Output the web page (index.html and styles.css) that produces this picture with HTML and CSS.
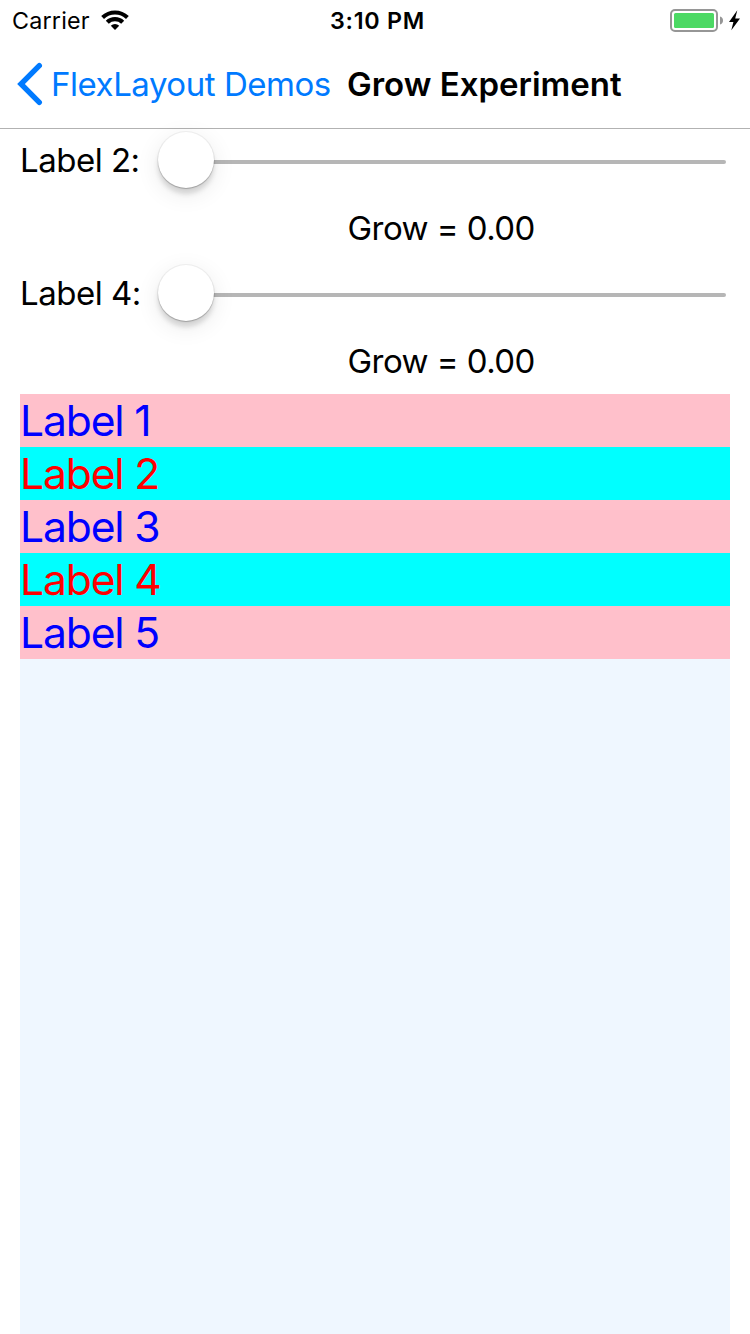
FILE: index.html
```html
<!DOCTYPE html>
<html lang="en">
<head>
<meta charset="utf-8">
<title>Grow Experiment</title>
<link rel="stylesheet" href="styles.css">
</head>
<body>
<header class="status">
  <span class="carrier">Carrier</span>
  <svg class="wifi" width="28" height="20" viewBox="0 0 28 20"><path d="M0.2 6A20 20 0 0 1 27.8 6L25 9A16 16 0 0 0 3 9Z"/><path d="M4.8 10.8A13.2 13.2 0 0 1 23.2 10.8L20.2 13.8A9 9 0 0 0 7.8 13.8Z"/><path d="M9.8 15.7A6.2 6.2 0 0 1 18.2 15.7L14 20Z"/></svg>
  <span class="time">3:10 PM</span>
  <svg class="battery" width="72" height="24" viewBox="0 0 72 24"><rect x="1" y="1" width="46" height="21" rx="4" fill="none" stroke="#969696" stroke-width="2"/><rect x="4" y="4" width="40" height="15" rx="1.5" fill="#4cd964"/><path d="M50 7.5Q53 8.3 53 11.5T50 15.5Z" fill="#969696"/><path d="M67.3 1.2L59 13H63.4L61.3 21.3L70 9.5H65.2Z" fill="#000"/></svg>
</header>
<nav class="nav">
  <svg class="back" width="26" height="44" viewBox="0 0 26 44"><path d="M22.3 3.7L4 22L22.3 40.3" fill="none" stroke="#007aff" stroke-width="5.4" stroke-linecap="round"/></svg>
  <span class="back-text">FlexLayout Demos</span>
  <h1 class="title">Grow Experiment</h1>
</nav>
<main class="content">
  <section class="control">
    <div class="row"><span class="name">Label 2:</span><div class="slider"><div class="track"></div><div class="thumb"></div></div></div>
    <div class="value">Grow = 0.00</div>
  </section>
  <section class="control">
    <div class="row"><span class="name">Label 4:</span><div class="slider"><div class="track"></div><div class="thumb"></div></div></div>
    <div class="value">Grow = 0.00</div>
  </section>
  <section class="stack">
    <div class="label pink">Label 1</div>
    <div class="label cyan">Label 2</div>
    <div class="label pink">Label 3</div>
    <div class="label cyan">Label 4</div>
    <div class="label pink">Label 5</div>
  </section>
</main>
</body>
</html>
```
FILE: styles.css
```css
* { box-sizing: border-box; }
body {
  margin: 0;
  height: 1334px;
  display: flex;
  flex-direction: column;
  background: #fff;
  color: #000;
  font-family: Inter, "Liberation Sans", sans-serif;
  font-size: 33px;
  white-space: nowrap;
  overflow: hidden;
}
.status {
  height: 40px;
  display: flex;
  align-items: center;
  padding: 1px 8px 0 12px;
  font-size: 23.3px;
}
.carrier { width: 89px; letter-spacing: 0.2px; }
.wifi { width: 28px; flex: none; margin-top: -1px; }
.time { margin-left: 201px; font-weight: 600; letter-spacing: 0.75px; }
.battery { margin-left: auto; flex: none; }
.nav {
  height: 88px;
  flex: none;
  display: flex;
  align-items: center;
  padding-left: 17px;
  box-shadow: 0 1px 0 #b2b2b2;
}
.back { flex: none; }
.back-text { width: 304px; padding-left: 8px; color: #007aff; letter-spacing: -0.46px; }
.title { margin: 0; font-size: 33px; font-weight: 600; }
.content { flex: 1; display: flex; flex-direction: column; padding: 0 20px; }
.control { height: 133px; }
.row { height: 64px; display: flex; align-items: center; }
.name { width: 138px; letter-spacing: -0.5px; }
.slider { width: 568px; height: 56px; display: flex; align-items: center; }
.track { flex: 1; height: 4px; margin: 4px 0 0 4px; border-radius: 2px; background: #b6b6b6; }
.thumb {
  order: -1;
  width: 56px;
  height: 56px;
  margin-right: -6px;
  border-radius: 50%;
  background: #fff;
  position: relative;
  box-shadow: 0 0 0 1px rgba(0,0,0,.05), 0 1px 1px rgba(0,0,0,.2), 0 6px 5px rgba(0,0,0,.13), 0 6px 24px rgba(0,0,0,.09);
}
.value { height: 69px; padding: 3px 0 0 327.5px; line-height: 66px; letter-spacing: -0.55px; }
.stack { flex: 1; background: #eff7ff; }
.label { height: 53px; line-height: 53px; font-size: 42.6px; letter-spacing: -1.15px; }
.pink { background: #ffc0cb; color: #00f; }
.cyan { background: #0ff; color: #f00; }
```
